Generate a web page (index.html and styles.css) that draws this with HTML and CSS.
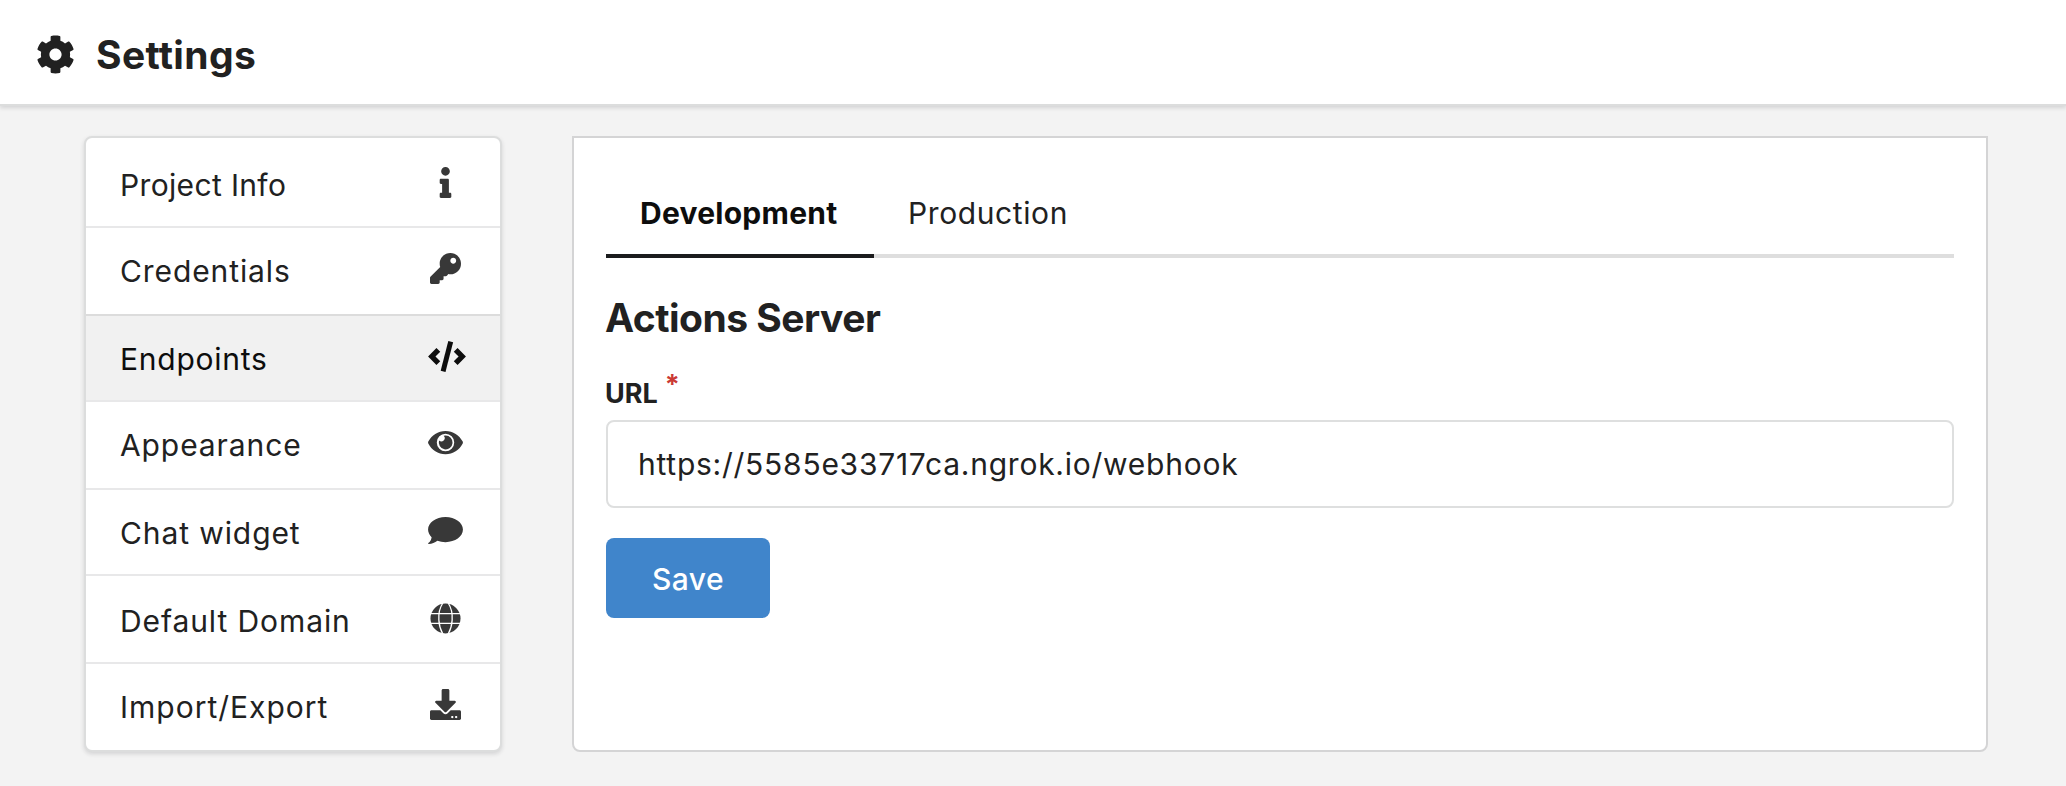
FILE: index.html
```html
<!DOCTYPE html>
<html lang="en">
<head>
<meta charset="utf-8">
<title>Settings</title>
<link rel="stylesheet" href="styles.css">
</head>
<body>
<header class="topbar">
  <svg class="topbar-icon" viewBox="0 0 512 512"><path d="M487.4 315.7l-42.6-24.6c4.3-23.2 4.3-47 0-70.2l42.6-24.6c4.9-2.8 7.1-8.6 5.5-14-11.1-35.6-30-67.8-54.7-94.6-3.8-4.1-10-5.1-14.8-2.3L380.8 110c-17.9-15.4-38.5-27.3-60.8-35.1V25.8c0-5.6-3.9-10.5-9.4-11.7-36.7-8.2-74.3-7.8-109.2 0-5.5 1.2-9.4 6.1-9.4 11.7V75c-22.2 7.9-42.8 19.8-60.8 35.1L88.7 85.5c-4.9-2.8-11-1.9-14.8 2.3-24.7 26.7-43.6 58.9-54.7 94.6-1.7 5.4.6 11.2 5.5 14L67.3 221c-4.3 23.2-4.3 47 0 70.2l-42.6 24.6c-4.9 2.8-7.1 8.6-5.5 14 11.1 35.6 30 67.8 54.7 94.6 3.8 4.1 10 5.1 14.8 2.3l42.6-24.6c17.9 15.4 38.5 27.3 60.8 35.1v49.2c0 5.6 3.9 10.5 9.4 11.7 36.7 8.2 74.3 7.8 109.2 0 5.5-1.2 9.4-6.1 9.4-11.7v-49.2c22.2-7.9 42.8-19.8 60.8-35.1l42.6 24.6c4.9 2.8 11 1.9 14.8-2.3 24.7-26.7 43.6-58.9 54.7-94.6 1.5-5.5-.7-11.3-5.6-14.1zM256 336c-44.1 0-80-35.9-80-80s35.9-80 80-80 80 35.9 80 80-35.9 80-80 80z"/></svg>
  <h1 class="topbar-title">Settings</h1>
</header>
<div class="layout">
  <nav class="menu">
    <a class="item item-info"><span class="label">Project Info</span>
      <svg class="icon" viewBox="-192 0 576 512"><path d="M20 424.229h20V279.771H20c-11.046 0-20-8.954-20-20V212c0-11.046 8.954-20 20-20h112c11.046 0 20 8.954 20 20v212.229h20c11.046 0 20 8.954 20 20V492c0 11.046-8.954 20-20 20H20c-11.046 0-20-8.954-20-20v-47.771c0-11.046 8.954-20 20-20zM96 0C56.235 0 24 32.235 24 72s32.235 72 72 72 72-32.235 72-72S135.764 0 96 0z"/></svg></a>
    <a class="item item-credentials"><span class="label">Credentials</span>
      <svg class="icon" viewBox="-32 0 576 512"><path d="M512 176C512 273.2 433.2 352 336 352c-11.2 0-22.2-1.1-32.8-3.1l-24 27A24 24 0 0 1 261.200 384H224v40c0 13.255-10.745 24-24 24h-40v40c0 13.255-10.745 24-24 24H24c-13.255 0-24-10.745-24-24v-78.059c0-6.365 2.529-12.47 7.029-16.971l161.802-161.802C163.108 213.814 160 195.271 160 176 160 78.800 238.800 0 336 0 433.500 0 512 78.500 512 176zM336 128c0 26.510 21.490 48 48 48s48-21.490 48-48-21.490-48-48-48-48 21.490-48 48z"/></svg></a>
    <a class="item item-endpoints active"><span class="label">Endpoints</span>
      <svg class="icon" viewBox="0 0 576 512"><path class="stroke-chevron" d="M170 146L62 256l108 110M456 146l108 110-108 110"/><path class="stroke-slash" d="M374 10L248 502"/></svg></a>
    <a class="item item-appearance"><span class="label">Appearance</span>
      <svg class="icon" viewBox="0 0 576 512"><path fill-rule="evenodd" d="M572.500 241.400C518.300 135.600 410.900 64 288 64S57.700 135.600 3.500 241.400a32.400 32.400 0 0 0 0 29.200C57.700 376.400 165.100 448 288 448s230.300-71.600 284.500-177.400a32.400 32.400 0 0 0 0-29.200zM288 400a144 144 0 1 1 0-288 144 144 0 0 1 0 288z"/><path d="M288 142a114 114 0 0 0-30 4 52 52 0 0 1-76 76A114 114 0 1 0 288 142z"/></svg></a>
    <a class="item item-chat"><span class="label">Chat widget</span>
      <svg class="icon" viewBox="0 0 576 512"><path d="M576 240c0 115-129 208-288 208-48.300 0-93.900-8.600-133.900-23.800-40.300 31.200-89.800 50.300-142.400 55.700-5.200.6-10.200-2.800-11.500-7.700-1.300-5 2.700-8.100 6.600-11.800 19.300-18.400 42.700-32.800 51.900-94.600C21.900 330.900 0 287.300 0 240 0 125.100 129 32 288 32s288 93.100 288 208z"/></svg></a>
    <a class="item item-domain"><span class="label">Default Domain</span>
      <svg class="icon" viewBox="-32 0 576 512"><circle cx="256" cy="256" r="248"/><path class="globe-lines" d="M0 176h512M0 336h512M212 0C152 90 140 180 146 280 150 370 172 440 212 512M300 0c60 90 72 180 66 280-4 90-26 160-66 232"/></svg></a>
    <a class="item item-import"><span class="label">Import/Export</span>
      <svg class="icon" viewBox="-32 0 576 512"><path d="M216 0h80c13.300 0 24 10.700 24 24v168h87.700c17.800 0 26.700 21.500 14.100 34.100L269.700 378.300c-7.500 7.500-19.800 7.500-27.300 0L90.100 226.100c-12.600-12.600-3.700-34.100 14.100-34.100H192V24c0-13.300 10.700-24 24-24zm296 376v112c0 13.300-10.700 24-24 24H24c-13.300 0-24-10.700-24-24V376c0-13.300 10.700-24 24-24h146.700l49 49c20.100 20.100 52.500 20.100 72.600 0l49-49H488c13.300 0 24 10.700 24 24zm-124 88c0-11-9-20-20-20s-20 9-20 20 9 20 20 20 20-9 20-20zm64 0c0-11-9-20-20-20s-20 9-20 20 9 20 20 20 20-9 20-20z"/></svg></a>
  </nav>
  <main class="panel">
    <div class="tabs">
      <a class="tab tab-active">Development</a>
      <a class="tab">Production</a>
    </div>
    <h2 class="section-title">Actions Server</h2>
    <label class="field-label" for="url">URL<span class="required">*</span></label>
    <input class="field-input" id="url" type="text" value="https://5585e33717ca.ngrok.io/webhook">
    <button class="save">Save</button>
  </main>
</div>
</body>
</html>
```
FILE: styles.css
```css
* { box-sizing: border-box; }
body {
  margin: 0;
  height: 786px;
  overflow: hidden;
  background: #f3f3f3;
  color: #212121;
  font-family: Inter, "Liberation Sans", sans-serif;
  font-size: 30px;
}
.topbar {
  display: flex;
  align-items: center;
  gap: 21px;
  height: 106px;
  padding: 4px 36px 0;
  background: #fff;
  border-bottom: 2px solid #dcdddd;
  box-shadow: 0 2px 4px rgba(34, 36, 38, .15);
}
.topbar-icon { width: 39px; height: 39px; fill: #212121; }
.topbar-title { margin: 0; padding-top: 2px; font-size: 39px; line-height: 48px; letter-spacing: .35px; }
.layout { display: flex; gap: 70px; padding: 30px 78px 0 84px; }
.menu {
  width: 418px;
  height: 616px;
  border: 2px solid #dcdddd;
  border-radius: 8px;
  background: #fff;
  overflow: hidden;
  box-shadow: 0 2px 4px rgba(34, 36, 38, .15);
}
.item {
  display: flex;
  justify-content: space-between;
  height: 88px;
  padding: 25px 37px 0 34px;
  border-bottom: 2px solid #e8e8e9;
  letter-spacing: .9px;
}
.item-info { height: 90px; padding-top: 29px; letter-spacing: .35px; }
.item-credentials { border-color: #dcdcdc; }
.item-endpoints, .item-chat { height: 86px; }
.item-endpoints { letter-spacing: .75px; }
.item-domain { padding-top: 27px; }
.item-import { height: 86px; border: 0; letter-spacing: 1px; }
.active { background: #f1f1f1; color: #0d0d0d; }
.label { line-height: 36px; }
.icon { width: 35px; height: 31px; fill: #383838; overflow: visible; }
.active .icon { fill: none; stroke: #0d0d0d; }
.stroke-chevron { stroke-width: 88; }
.stroke-slash { stroke-width: 82; }
.globe-lines { fill: none; stroke: #fff; stroke-width: 22; }
.panel {
  flex: 1;
  display: flex;
  flex-direction: column;
  align-items: flex-start;
  height: 616px;
  padding: 52px 32px 0;
  border: 2px solid #d4d4d5;
  border-radius: 0 0 8px 8px;
  background: #fff;
}
.tabs { display: flex; align-self: stretch; height: 68px; box-shadow: inset 0 -4px #dedede; }
.tab { padding: 3px 34px 0; line-height: 40px; letter-spacing: .6px; }
.tab-active {
  width: 268px;
  border-bottom: 4px solid #1b1c1d;
  color: #0d0d0d;
  font-weight: 700;
  letter-spacing: .25px;
}
.section-title { margin: 36px 0 0 -1px; font-size: 39px; line-height: 48px; letter-spacing: -.5px; }
.field-label { display: flex; margin: 34px 0 0 -1px; font-size: 27px; line-height: 36px; font-weight: 700; }
.required { margin: -9px 0 0 7px; color: #cb3a34; }
.field-input {
  width: 100%;
  height: 88px;
  margin-top: 8px;
  padding: 0 30px;
  border: 2px solid #dedfdf;
  border-radius: 8px;
  background: #fff;
  color: #212121;
  font: inherit;
  letter-spacing: .75px;
}
.save {
  width: 164px;
  height: 80px;
  margin-top: 30px;
  padding: 2px 0 0;
  border: 0;
  border-radius: 8px;
  background: #4085cb;
  color: #fff;
  font: inherit;
  font-weight: 500;
  letter-spacing: .4px;
}
```
